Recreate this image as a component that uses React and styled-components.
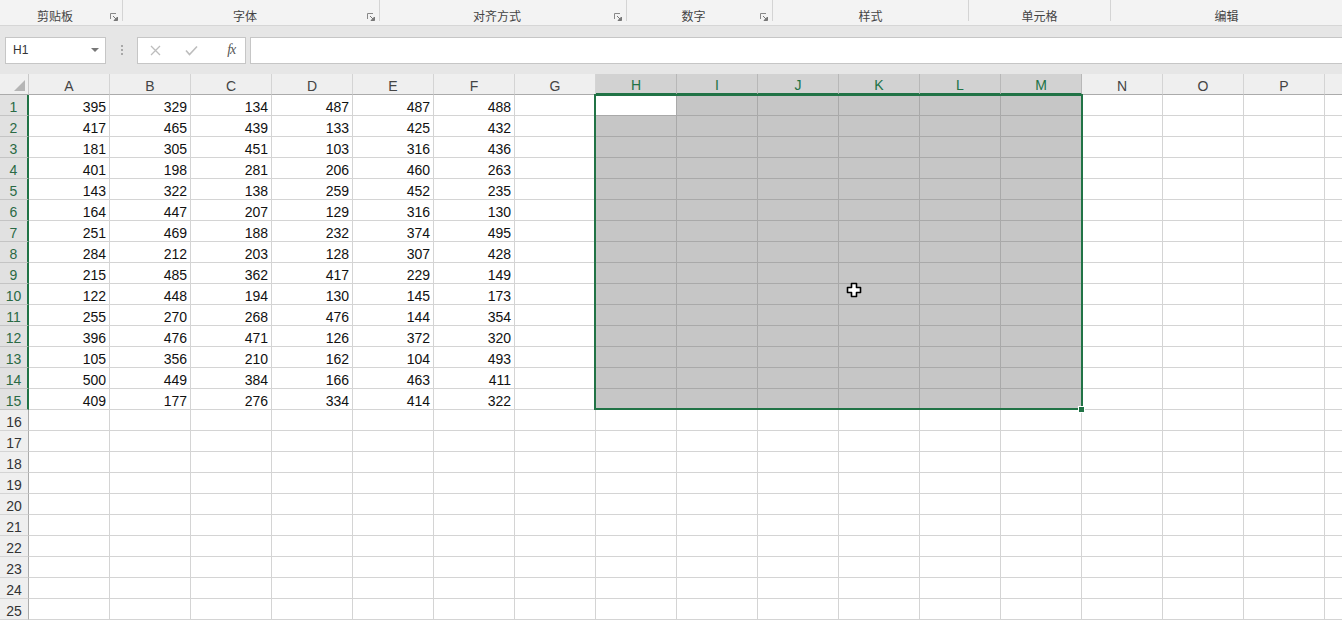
import React from "react";
import styled, { createGlobalStyle } from "styled-components";

const GlobalStyle = createGlobalStyle`
  html, body { margin: 0; padding: 0; background: #fff; overflow: hidden; }
  body { font-family: "Liberation Sans", Arial, sans-serif; }
  * { box-sizing: border-box; }
`;

// the last column is only partly visible, so its letter is not shown
const COLS = ["A", "B", "C", "D", "E", "F", "G", "H", "I", "J", "K", "L", "M", "N", "O", "P", ""];
const ROWS = 25;
const SEL = { c0: 7, c1: 12, r0: 1, r1: 15 };

const DATA = [
  [395, 329, 134, 487, 487, 488],
  [417, 465, 439, 133, 425, 432],
  [181, 305, 451, 103, 316, 436],
  [401, 198, 281, 206, 460, 263],
  [143, 322, 138, 259, 452, 235],
  [164, 447, 207, 129, 316, 130],
  [251, 469, 188, 232, 374, 495],
  [284, 212, 203, 128, 307, 428],
  [215, 485, 362, 417, 229, 149],
  [122, 448, 194, 130, 145, 173],
  [255, 270, 268, 476, 144, 354],
  [396, 476, 471, 126, 372, 320],
  [105, 356, 210, 162, 104, 493],
  [500, 449, 384, 166, 463, 411],
  [409, 177, 276, 334, 414, 322],
];

const GROUPS = [
  { label: "剪贴板", width: 123, launcher: true },
  { label: "字体", width: 257, launcher: true },
  { label: "对齐方式", width: 247, launcher: true },
  { label: "数字", width: 146, launcher: true },
  { label: "样式", width: 196 },
  { label: "单元格", width: 142 },
  { label: "编辑", width: 231 },
];

const Ribbon = styled.div`
  display: flex;
  align-items: flex-start;
  height: 26px;
  background: #f3f3f3;
  border-bottom: 1px solid #d6d6d6;
`;

const Group = styled.div`
  display: flex;
  align-items: flex-end;
  flex: 0 0 ${(p) => p.$w}px;
  height: 21px;
  border-right: ${(p) => (p.$last ? "none" : "1px solid #d4d4d4")};
`;

const GroupLabel = styled.div`
  flex: 1;
  text-align: center;
  font-family: "Noto Sans CJK SC", "Liberation Sans", sans-serif;
  font-size: 12px;
  line-height: 16px;
  color: #444;
  margin-bottom: -3px;
`;

const Launcher = styled.svg`
  flex: 0 0 8px;
  width: 8px;
  height: 8px;
  margin: 0 4px 0 0;
`;

const FormulaRow = styled.div`
  display: flex;
  align-items: center;
  height: 48px;
  padding: 0 0 0 5px;
  background: #e6e6e6;
`;

const NameBox = styled.div`
  display: flex;
  align-items: center;
  justify-content: space-between;
  width: 101px;
  height: 27px;
  padding: 0 6px 0 7px;
  background: #fff;
  border: 1px solid #c6c6c6;
  font-size: 12px;
  color: #333;
`;

const Caret = styled.span`
  width: 0;
  height: 0;
  border-left: 4px solid transparent;
  border-right: 4px solid transparent;
  border-top: 4px solid #777;
`;

const Dots = styled.div`
  display: flex;
  flex-direction: column;
  align-items: center;
  justify-content: center;
  gap: 2px;
  width: 31px;
  & span {
    width: 2px;
    height: 2px;
    background: #a8a8a8;
  }
`;

const FxBox = styled.div`
  display: flex;
  align-items: center;
  width: 109px;
  height: 27px;
  background: #fff;
  border: 1px solid #c6c6c6;
  margin-right: 4px;
`;

const FxButton = styled.div`
  flex: 1;
  display: flex;
  align-items: center;
  justify-content: center;
  height: 100%;
`;

const FxText = styled.span`
  font-family: "Liberation Serif", "Times New Roman", serif;
  font-style: italic;
  font-size: 14px;
  color: #555;
  letter-spacing: -1px;
  padding-left: 8px;
`;

const FormulaInput = styled.div`
  flex: 1;
  height: 27px;
  background: #fff;
  border: 1px solid #c6c6c6;
  border-right: none;
`;

const Sheet = styled.div`
  position: relative;
  overflow: hidden;
  height: 546px;
`;

const Grid = styled.div`
  display: grid;
  grid-template-columns: 29px repeat(${COLS.length}, 81px);
  grid-auto-rows: 21px;
`;

const Corner = styled.div`
  background: #efefef;
  border-right: 1px solid #c9c9c9;
  border-bottom: 1px solid #ababab;
  display: flex;
  align-items: flex-end;
  justify-content: flex-end;
  padding: 0 3px 3px 0;
`;

const ColHeader = styled.div`
  display: flex;
  align-items: center;
  justify-content: center;
  font-size: 14px;
  padding-top: 3px;
  color: ${(p) => (p.$sel ? "#217346" : "#444")};
  background: ${(p) => (p.$sel ? "#d2d2d2" : "#efefef")};
  border-right: 1px solid ${(p) => (p.$sel ? "#b8b8b8" : "#d4d4d4")};
  border-bottom: ${(p) => (p.$sel ? "2px solid #217346" : "1px solid #ababab")};
`;

const RowHeader = styled.div`
  display: flex;
  align-items: center;
  justify-content: center;
  font-size: 14px;
  padding-top: 3px;
  color: ${(p) => (p.$sel ? "#2a6a45" : "#333")};
  background: ${(p) => (p.$sel ? "#e1e1e1" : "#efefef")};
  border-right: ${(p) => (p.$sel ? "2px solid #217346" : "1px solid #ababab")};
  border-bottom: 1px solid ${(p) => (p.$sel ? "#c4c4c4" : "#d4d4d4")};
`;

const Cell = styled.div`
  display: flex;
  align-items: center;
  justify-content: flex-end;
  padding: 4px 3px 0 0;
  font-size: 14px;
  color: #111;
  background: ${(p) => (p.$active ? "#fff" : p.$sel ? "#c6c6c6" : "#fff")};
  border-right: 1px solid ${(p) => (p.$sel ? "#a9a9a9" : "#d4d4d4")};
  border-bottom: 1px solid ${(p) => (p.$sel ? "#a9a9a9" : "#d4d4d4")};
`;

const SelectionFrame = styled.div`
  position: absolute;
  left: 594px;
  top: 20px;
  width: 489px;
  height: 316px;
  border: 2px solid #217346;
  pointer-events: none;
`;

const FillHandle = styled.div`
  position: absolute;
  left: 1078px;
  top: 332px;
  width: 7px;
  height: 7px;
  background: #217346;
  border: 1px solid #fff;
`;

const Cursor = styled.svg`
  position: absolute;
  left: 846px;
  top: 208px;
  width: 16px;
  height: 16px;
`;

function RibbonLabels() {
  return (
    <Ribbon>
      {GROUPS.map((g, i) => (
        <Group key={g.label} $w={g.width} $last={i === GROUPS.length - 1}>
          <GroupLabel>{g.label}</GroupLabel>
          {g.launcher && (
            <Launcher viewBox="0 0 8 8">
              <path d="M0.5 6V0.5H6" fill="none" stroke="#888" strokeWidth="1" />
              <path d="M3 3L6.5 6.5M7.5 4V7.5H4Z" fill="#777" stroke="#777" strokeWidth="1" />
            </Launcher>
          )}
        </Group>
      ))}
    </Ribbon>
  );
}

function FormulaBar() {
  return (
    <FormulaRow>
      <NameBox>
        H1
        <Caret />
      </NameBox>
      <Dots>
        <span />
        <span />
        <span />
      </Dots>
      <FxBox>
        <FxButton>
          <svg width="11" height="11" viewBox="0 0 11 11">
            <path d="M1 1L10 10M10 1L1 10" stroke="#bdbdbd" strokeWidth="1.3" />
          </svg>
        </FxButton>
        <FxButton>
          <svg width="13" height="11" viewBox="0 0 13 11">
            <path d="M1 5.5L4.5 9.5L12 1.5" fill="none" stroke="#bdbdbd" strokeWidth="1.6" />
          </svg>
        </FxButton>
        <FxButton>
          <FxText>fx</FxText>
        </FxButton>
      </FxBox>
      <FormulaInput />
    </FormulaRow>
  );
}

function SheetGrid() {
  const cells = [];
  cells.push(
    <Corner key="corner">
      <svg width="11" height="11" viewBox="0 0 11 11">
        <path d="M11 0V11H0Z" fill="#b5b5b5" />
      </svg>
    </Corner>
  );
  COLS.forEach((c, ci) => {
    cells.push(
      <ColHeader key={`h-${ci}`} $sel={ci >= SEL.c0 && ci <= SEL.c1}>
        {c}
      </ColHeader>
    );
  });
  for (let r = 1; r <= ROWS; r++) {
    const rowSel = r >= SEL.r0 && r <= SEL.r1;
    cells.push(
      <RowHeader key={`r-${r}`} $sel={rowSel}>
        {r}
      </RowHeader>
    );
    COLS.forEach((c, ci) => {
      const sel = rowSel && ci >= SEL.c0 && ci <= SEL.c1;
      const active = r === SEL.r0 && ci === SEL.c0;
      const v = DATA[r - 1] && DATA[r - 1][ci];
      cells.push(
        <Cell key={`${ci}-${r}`} $sel={sel} $active={active}>
          {v}
        </Cell>
      );
    });
  }
  return (
    <Sheet>
      <Grid>{cells}</Grid>
      <SelectionFrame />
      <FillHandle />
      <Cursor viewBox="0 0 16 16">
        <path
          d="M5.5 1.5H10.5V5.5H14.5V10.5H10.5V14.5H5.5V10.5H1.5V5.5H5.5Z"
          fill="#fff"
          stroke="#000"
          strokeWidth="1.6"
          strokeLinejoin="round"
        />
      </Cursor>
    </Sheet>
  );
}

export default function App() {
  return (
    <>
      <GlobalStyle />
      <RibbonLabels />
      <FormulaBar />
      <SheetGrid />
    </>
  );
}
